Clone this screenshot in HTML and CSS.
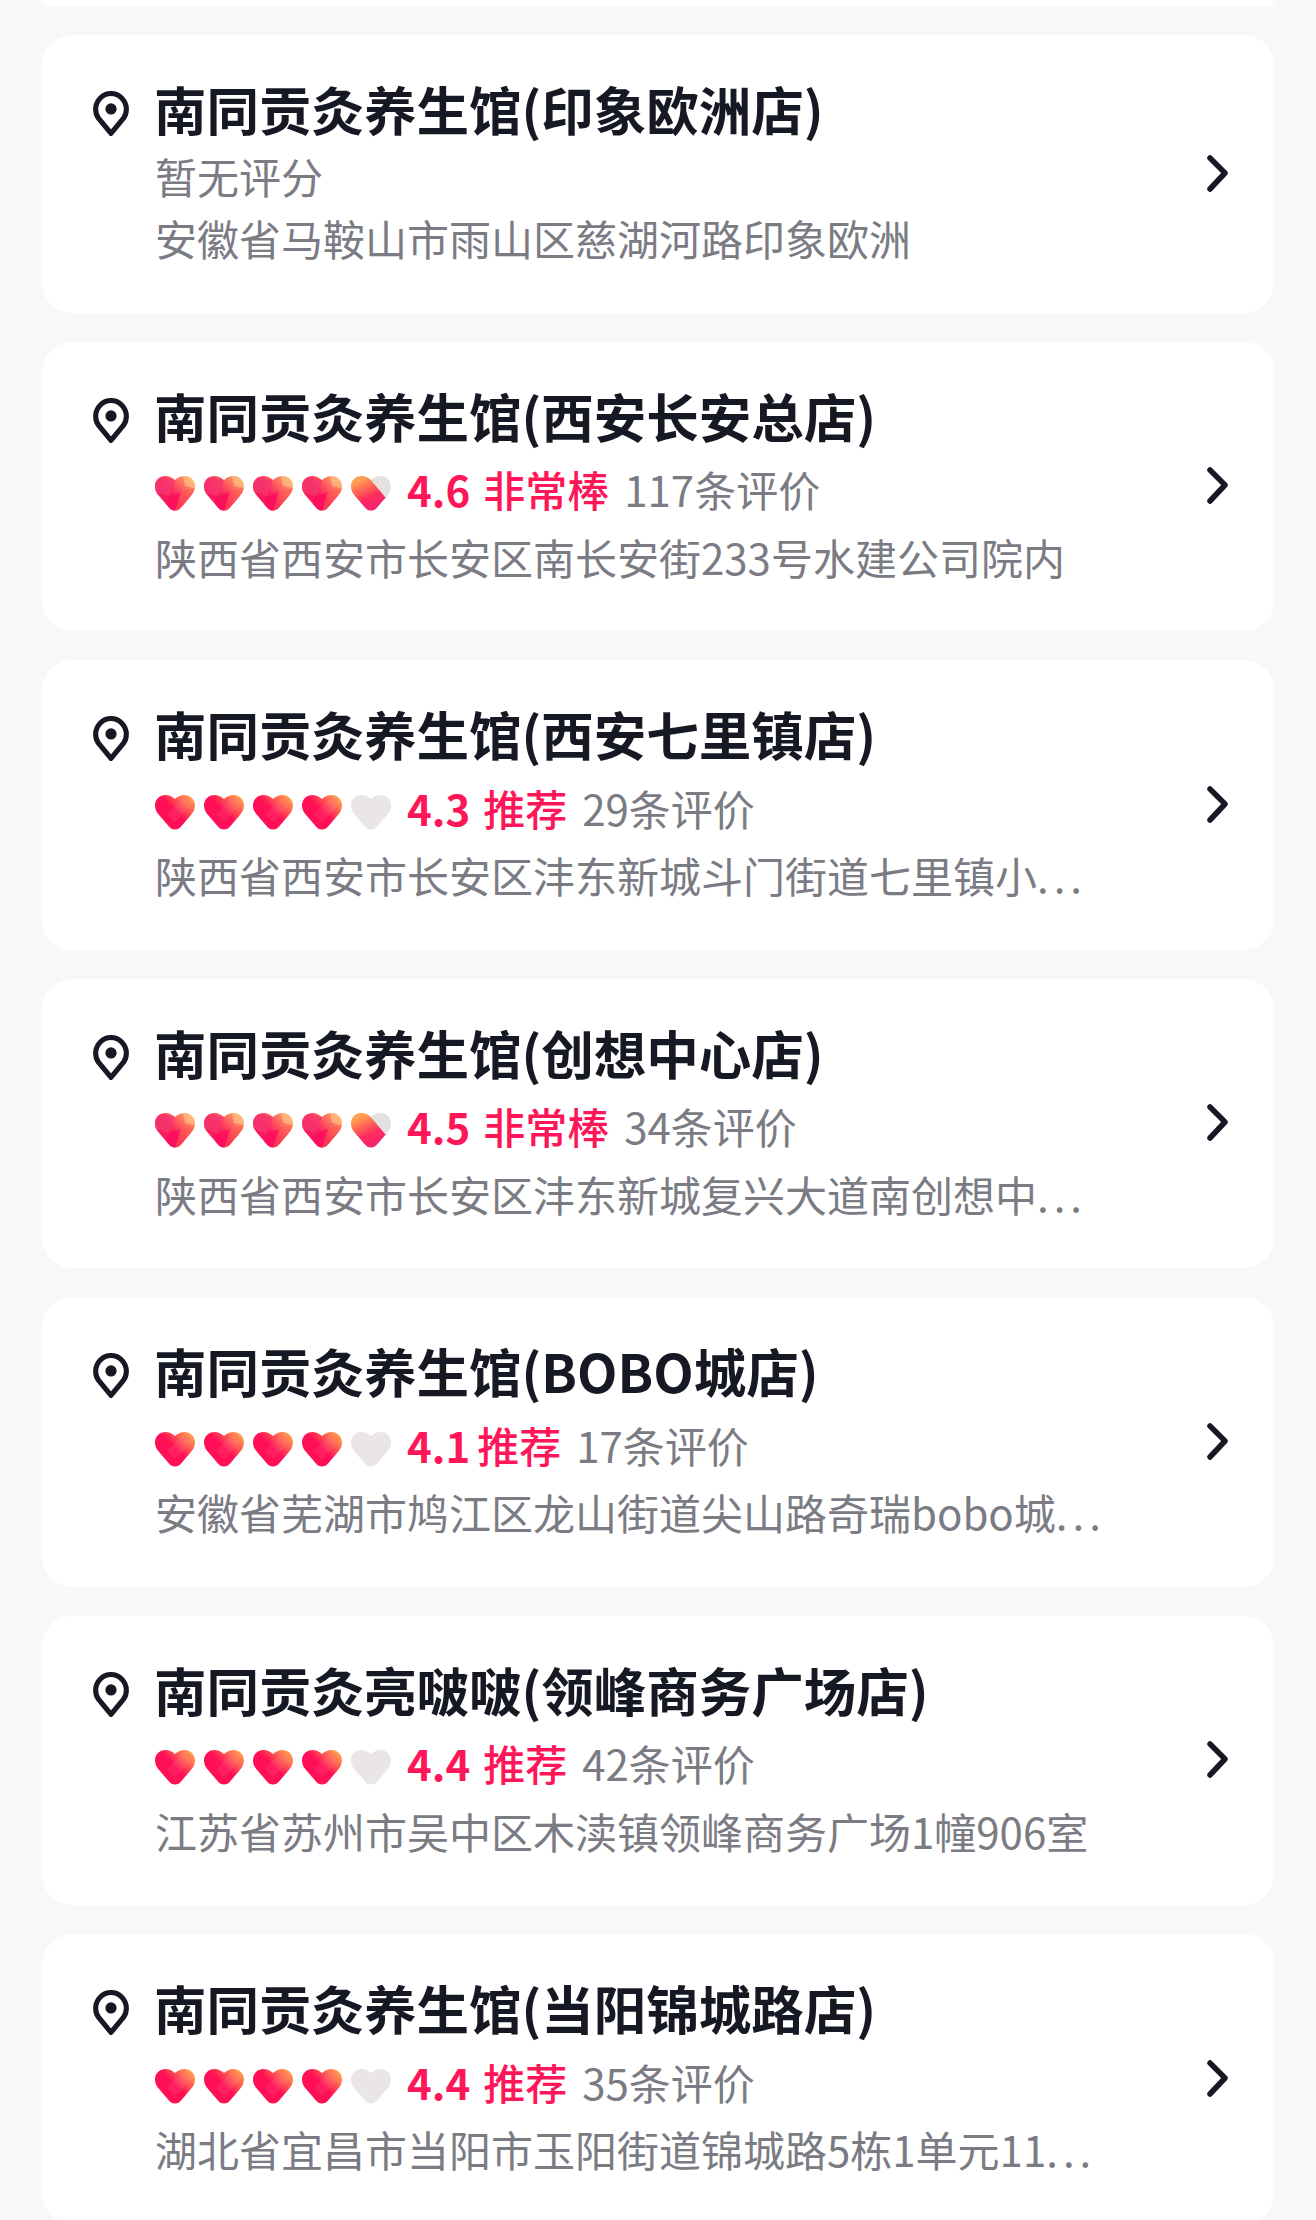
FILE: index.html
```html
<!DOCTYPE html>
<html lang="zh-CN">
<head>
    <meta charset="UTF-8">
    <meta name="viewport" content="width=device-width, initial-scale=1.0">
    <title>门店列表</title>
    <link rel="stylesheet" href="styles.css">
</head>
<body>

    <!-- 爱心、定位和箭头图标 -->
    <svg class="icon-defs" aria-hidden="true">
        <defs>
            <linearGradient id="smoothFill" x1="0.15" y1="0.8" x2="0.95" y2="0.1">
                <stop offset="0.45" stop-color="#ff0f55"/>
                <stop offset="1" stop-color="#ffa550"/>
            </linearGradient>
            <linearGradient id="facetFill" x1="0.15" y1="0.8" x2="0.95" y2="0.1">
                <stop offset="0.35" stop-color="#fb1a5c"/>
                <stop offset="1" stop-color="#ffae62"/>
            </linearGradient>
            <linearGradient id="halfFill" x1="0.2" y1="0" x2="0.7" y2="1">
                <stop offset="0.1" stop-color="#ffa050"/>
                <stop offset="0.6" stop-color="#ff2c5c"/>
                <stop offset="1" stop-color="#f0207c"/>
            </linearGradient>
            <clipPath id="halfClip">
                <polygon points="0,0 19,0 19,3 34,21 40,21 40,35 0,35"/>
            </clipPath>
            <path id="heartShape" d="M20 4C17 1.500 14 0 10.500 0 4.500 0 0 4.500 0 10.500c0 4 1.800 7 4.500 10l9 10.500c3.500 4.800 9.500 4.800 13 0l9-10.500c2.700-3 4.500-6 4.500-10C40 4.500 35.500 0 29.500 0 26 0 23 1.500 20 4z"/>
            <clipPath id="heartClip"><use href="#heartShape"/></clipPath>
            <symbol id="heartFull" viewBox="0 0 40 35">
                <use href="#heartShape" fill="url(#smoothFill)"/>
                <g clip-path="url(#heartClip)">
                    <polygon points="12,19 28,3 36,11 20,27" fill="#fff" opacity="0.07"/>
                </g>
            </symbol>
            <symbol id="heartFacet" viewBox="0 0 40 35">
                <use href="#heartShape" fill="url(#facetFill)"/>
                <g clip-path="url(#heartClip)">
                    <polygon points="0,0 20,4 14,20 0,16" fill="#f5366f" opacity="0.8"/>
                    <polygon points="14,20 26,16 20,35 8,35" fill="#ff0a60" opacity="0.7"/>
                    <polygon points="28,0 40,0 40,12 30,10" fill="#ffc58a" opacity="0.6"/>
                    <polygon points="26,16 40,12 28,35 20,35" fill="#ff5a50" opacity="0.5"/>
                </g>
            </symbol>
            <symbol id="heartHalf" viewBox="0 0 40 35">
                <use href="#heartShape" fill="#e4e1e0"/>
                <g clip-path="url(#halfClip)">
                    <use href="#heartShape" fill="url(#halfFill)"/>
                </g>
            </symbol>
            <symbol id="heartEmpty" viewBox="0 0 40 35">
                <use href="#heartShape" fill="#e9e6e5"/>
            </symbol>
            <symbol id="pinIcon" viewBox="0 0 35 44">
                <path d="M17.500 41.500 5.200 26.500C3.300 24 2.500 21 2.500 17.800 2.500 9.500 9.200 2.500 17.500 2.500s15 7 15 15.300c0 3.200-.8 6.200-2.700 8.700z" fill="none" stroke="#161823" stroke-width="5" stroke-linejoin="round"/>
                <circle cx="17.500" cy="17.500" r="5.500" fill="#161823"/>
            </symbol>
            <symbol id="arrowIcon" viewBox="0 0 21 37">
                <path d="M3 3 18 18 3 34" fill="none" stroke="#161823" stroke-width="5.500" stroke-linecap="round" stroke-linejoin="round"/>
            </symbol>
        </defs>
    </svg>

    <div class="shop-list">
        <div class="shop-card-end"></div>

        <div class="shop-card">
            <svg class="pin"><use href="#pinIcon"/></svg>
            <div class="shop-info">
                <div class="shop-name">南同贡灸养生馆(印象欧洲店)</div>
                <div class="no-score">暂无评分</div>
                <div class="shop-address no-score-address">安徽省马鞍山市雨山区慈湖河路印象欧洲</div>
            </div>
            <svg class="arrow"><use href="#arrowIcon"/></svg>
        </div>

        <div class="shop-card">
            <svg class="pin"><use href="#pinIcon"/></svg>
            <div class="shop-info">
                <div class="shop-name">南同贡灸养生馆(西安长安总店)</div>
                <div class="rating">
                    <div class="hearts">
                        <svg class="heart"><use href="#heartFacet"/></svg>
                        <svg class="heart"><use href="#heartFacet"/></svg>
                        <svg class="heart"><use href="#heartFacet"/></svg>
                        <svg class="heart"><use href="#heartFacet"/></svg>
                        <svg class="heart"><use href="#heartHalf"/></svg>
                    </div>
                    <span class="score">4.6</span>
                    <span class="score-label">非常棒</span>
                    <span class="review-count">117条评价</span>
                </div>
                <div class="shop-address">陕西省西安市长安区南长安街233号水建公司院内</div>
            </div>
            <svg class="arrow"><use href="#arrowIcon"/></svg>
        </div>

        <div class="shop-card">
            <svg class="pin"><use href="#pinIcon"/></svg>
            <div class="shop-info">
                <div class="shop-name">南同贡灸养生馆(西安七里镇店)</div>
                <div class="rating">
                    <div class="hearts">
                        <svg class="heart"><use href="#heartFull"/></svg>
                        <svg class="heart"><use href="#heartFull"/></svg>
                        <svg class="heart"><use href="#heartFull"/></svg>
                        <svg class="heart"><use href="#heartFull"/></svg>
                        <svg class="heart"><use href="#heartEmpty"/></svg>
                    </div>
                    <span class="score">4.3</span>
                    <span class="score-label">推荐</span>
                    <span class="review-count">29条评价</span>
                </div>
                <div class="shop-address">陕西省西安市长安区沣东新城斗门街道七里镇小<span class="dots">...</span></div>
            </div>
            <svg class="arrow"><use href="#arrowIcon"/></svg>
        </div>

        <div class="shop-card">
            <svg class="pin"><use href="#pinIcon"/></svg>
            <div class="shop-info">
                <div class="shop-name">南同贡灸养生馆(创想中心店)</div>
                <div class="rating">
                    <div class="hearts">
                        <svg class="heart"><use href="#heartFacet"/></svg>
                        <svg class="heart"><use href="#heartFacet"/></svg>
                        <svg class="heart"><use href="#heartFacet"/></svg>
                        <svg class="heart"><use href="#heartFacet"/></svg>
                        <svg class="heart"><use href="#heartHalf"/></svg>
                    </div>
                    <span class="score">4.5</span>
                    <span class="score-label">非常棒</span>
                    <span class="review-count">34条评价</span>
                </div>
                <div class="shop-address">陕西省西安市长安区沣东新城复兴大道南创想中<span class="dots">...</span></div>
            </div>
            <svg class="arrow"><use href="#arrowIcon"/></svg>
        </div>

        <div class="shop-card">
            <svg class="pin"><use href="#pinIcon"/></svg>
            <div class="shop-info">
                <div class="shop-name">南同贡灸养生馆(BOBO城店)</div>
                <div class="rating">
                    <div class="hearts">
                        <svg class="heart"><use href="#heartFull"/></svg>
                        <svg class="heart"><use href="#heartFull"/></svg>
                        <svg class="heart"><use href="#heartFull"/></svg>
                        <svg class="heart"><use href="#heartFull"/></svg>
                        <svg class="heart"><use href="#heartEmpty"/></svg>
                    </div>
                    <span class="score score-narrow">4.1</span>
                    <span class="score-label">推荐</span>
                    <span class="review-count">17条评价</span>
                </div>
                <div class="shop-address">安徽省芜湖市鸠江区龙山街道尖山路奇瑞bobo城<span class="dots">...</span></div>
            </div>
            <svg class="arrow"><use href="#arrowIcon"/></svg>
        </div>

        <div class="shop-card">
            <svg class="pin"><use href="#pinIcon"/></svg>
            <div class="shop-info">
                <div class="shop-name">南同贡灸亮啵啵(领峰商务广场店)</div>
                <div class="rating">
                    <div class="hearts">
                        <svg class="heart"><use href="#heartFull"/></svg>
                        <svg class="heart"><use href="#heartFull"/></svg>
                        <svg class="heart"><use href="#heartFull"/></svg>
                        <svg class="heart"><use href="#heartFull"/></svg>
                        <svg class="heart"><use href="#heartEmpty"/></svg>
                    </div>
                    <span class="score">4.4</span>
                    <span class="score-label">推荐</span>
                    <span class="review-count">42条评价</span>
                </div>
                <div class="shop-address">江苏省苏州市吴中区木渎镇领峰商务广场1幢906室</div>
            </div>
            <svg class="arrow"><use href="#arrowIcon"/></svg>
        </div>

        <div class="shop-card">
            <svg class="pin"><use href="#pinIcon"/></svg>
            <div class="shop-info">
                <div class="shop-name">南同贡灸养生馆(当阳锦城路店)</div>
                <div class="rating">
                    <div class="hearts">
                        <svg class="heart"><use href="#heartFull"/></svg>
                        <svg class="heart"><use href="#heartFull"/></svg>
                        <svg class="heart"><use href="#heartFull"/></svg>
                        <svg class="heart"><use href="#heartFull"/></svg>
                        <svg class="heart"><use href="#heartEmpty"/></svg>
                    </div>
                    <span class="score">4.4</span>
                    <span class="score-label">推荐</span>
                    <span class="review-count">35条评价</span>
                </div>
                <div class="shop-address">湖北省宜昌市当阳市玉阳街道锦城路5栋1单元11<span class="dots">...</span></div>
            </div>
            <svg class="arrow"><use href="#arrowIcon"/></svg>
        </div>
    </div>

</body>
</html>
```

FILE: styles.css
```css
html, body {
    height: 2220px;
    overflow: hidden;
}
body {
    margin: 0;
    background-color: #f8f8f8;
    font-family: "Noto Sans CJK SC", "Noto Sans", sans-serif;
    color: #161823;
}
.icon-defs {
    display: block;
    width: 0;
    height: 0;
}
.shop-list {
    display: flex;
    flex-direction: column;
    gap: 29px;
    padding: 0 42px;
}
.shop-card-end {
    height: 6px;
    background-color: #fff;
    border-radius: 0 0 30px 30px;
}
.shop-card {
    display: flex;
    flex-shrink: 0;
    padding: 41px 46px 44.5px 51px;
    background-color: #fff;
    border-radius: 30px;
}
.shop-card:nth-child(2) {
    padding-bottom: 44.6px;
}
.pin {
    flex-shrink: 0;
    width: 36px;
    height: 45px;
    margin-top: 15px;
    margin-right: 26px;
}
.shop-info {
    flex: 1;
    min-width: 0;
}
.arrow {
    flex-shrink: 0;
    align-self: center;
    width: 21px;
    height: 37px;
    margin-top: 2px;
}
.shop-name {
    margin-left: -1px;
    font-size: 52.5px;
    font-weight: 700;
    line-height: 64px;
    white-space: nowrap;
}
.no-score {
    margin-top: 6px;
    font-size: 42px;
    line-height: 60px;
    color: #7b7b84;
}
.rating {
    display: flex;
    align-items: center;
    height: 60px;
    margin-top: 12px;
    font-size: 42px;
    white-space: nowrap;
}
.hearts {
    display: flex;
    gap: 9px;
    margin-top: 10px;
    margin-right: 16px;
}
.heart {
    width: 40px;
    height: 35px;
}
.score {
    margin-right: 13px;
    font-weight: 700;
    color: #fe1658;
}
/* 数字1比较窄 */
.score-narrow {
    margin-right: 7px;
}
.score-label {
    margin-right: 15px;
    font-weight: 500;
    color: #fe1658;
}
.review-count {
    color: #7b7b84;
}
.shop-address {
    margin-top: 8px;
    font-size: 42px;
    line-height: 60px;
    color: #7b7b84;
    white-space: nowrap;
}
.no-score-address {
    margin-top: 2px;
}
.dots {
    letter-spacing: 5px;
}
```
